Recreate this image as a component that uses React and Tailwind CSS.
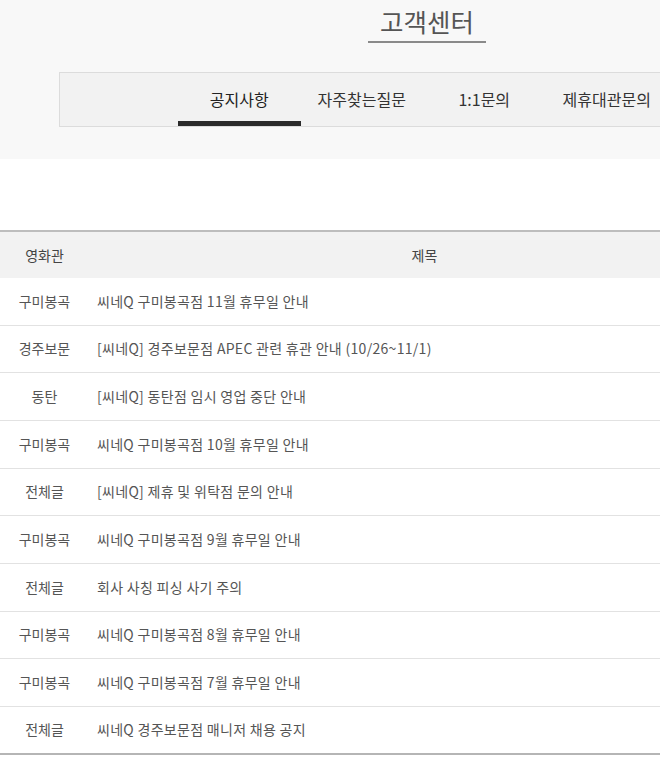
import React from "react";

const rows = [
  ["구미봉곡", "씨네Q 구미봉곡점 11월 휴무일 안내"],
  ["경주보문", "[씨네Q] 경주보문점 APEC 관련 휴관 안내 (10/26~11/1)"],
  ["동탄", "[씨네Q] 동탄점 임시 영업 중단 안내"],
  ["구미봉곡", "씨네Q 구미봉곡점 10월 휴무일 안내"],
  ["전체글", "[씨네Q] 제휴 및 위탁점 문의 안내"],
  ["구미봉곡", "씨네Q 구미봉곡점 9월 휴무일 안내"],
  ["전체글", "회사 사칭 피싱 사기 주의"],
  ["구미봉곡", "씨네Q 구미봉곡점 8월 휴무일 안내"],
  ["구미봉곡", "씨네Q 구미봉곡점 7월 휴무일 안내"],
  ["전체글", "씨네Q 경주보문점 매니저 채용 공지"],
];

const tabs = ["공지사항", "자주찾는질문", "1:1문의", "제휴대관문의"];

export default function App() {
  return (
    <div
      className="w-[660px] h-[770px] overflow-hidden bg-white"
      style={{ fontFamily: '"Noto Sans CJK KR", "Noto Sans", sans-serif' }}
    >
      <div className="w-[854px] h-[159px] bg-[#f8f8f8] pt-[4px]">
        <div className="flex justify-center">
          <div className="flex flex-col items-center w-[118px]">
            <div className="text-[25.5px] leading-[34px] text-[#555]">고객센터</div>
            <div className="w-[118px] h-[2px] bg-[#8a8a8a] mt-[3px]" />
          </div>
        </div>
        <div className="ml-[59px] mt-[29px] w-[736px] h-[55px] border border-[#dcdcdc] bg-[#f2f2f2] flex pl-[118px]">
          {tabs.map((t, i) => (
            <div
              key={t}
              className={`w-[122.5px] h-full flex items-center justify-center text-[16px] relative ${
                i === 0 ? "text-[#222]" : "text-[#333]"
              }`}
            >
              <span className="-mt-[1px]">{t}</span>
              {i === 0 && (
                <div className="absolute left-0 right-0 bottom-0 h-[5px] bg-[#2b2b2b]" />
              )}
            </div>
          ))}
        </div>
      </div>
      <div className="h-[71px]" />
      <div className="w-[760px] border-t-2 border-[#bdbdbd]">
        <div className="flex h-[46px] bg-[#f2f2f2] items-center text-[14px] text-[#444]">
          <div className="w-[89px] text-center">영화관</div>
          <div className="flex-1 text-center">제목</div>
        </div>
        {rows.map(([a, b], i) => (
          <div
            key={i}
            className={`flex h-[47.67px] items-center text-[14px] text-[#555] border-b ${
              i === rows.length - 1 ? "border-[#b5b5b5] border-b-2" : "border-[#e2e2e2]"
            }`}
          >
            <div className="w-[89px] text-center">{a}</div>
            <div className="flex-1 pl-[8px] tracking-[0.3px]">{b}</div>
          </div>
        ))}
      </div>
    </div>
  );
}
